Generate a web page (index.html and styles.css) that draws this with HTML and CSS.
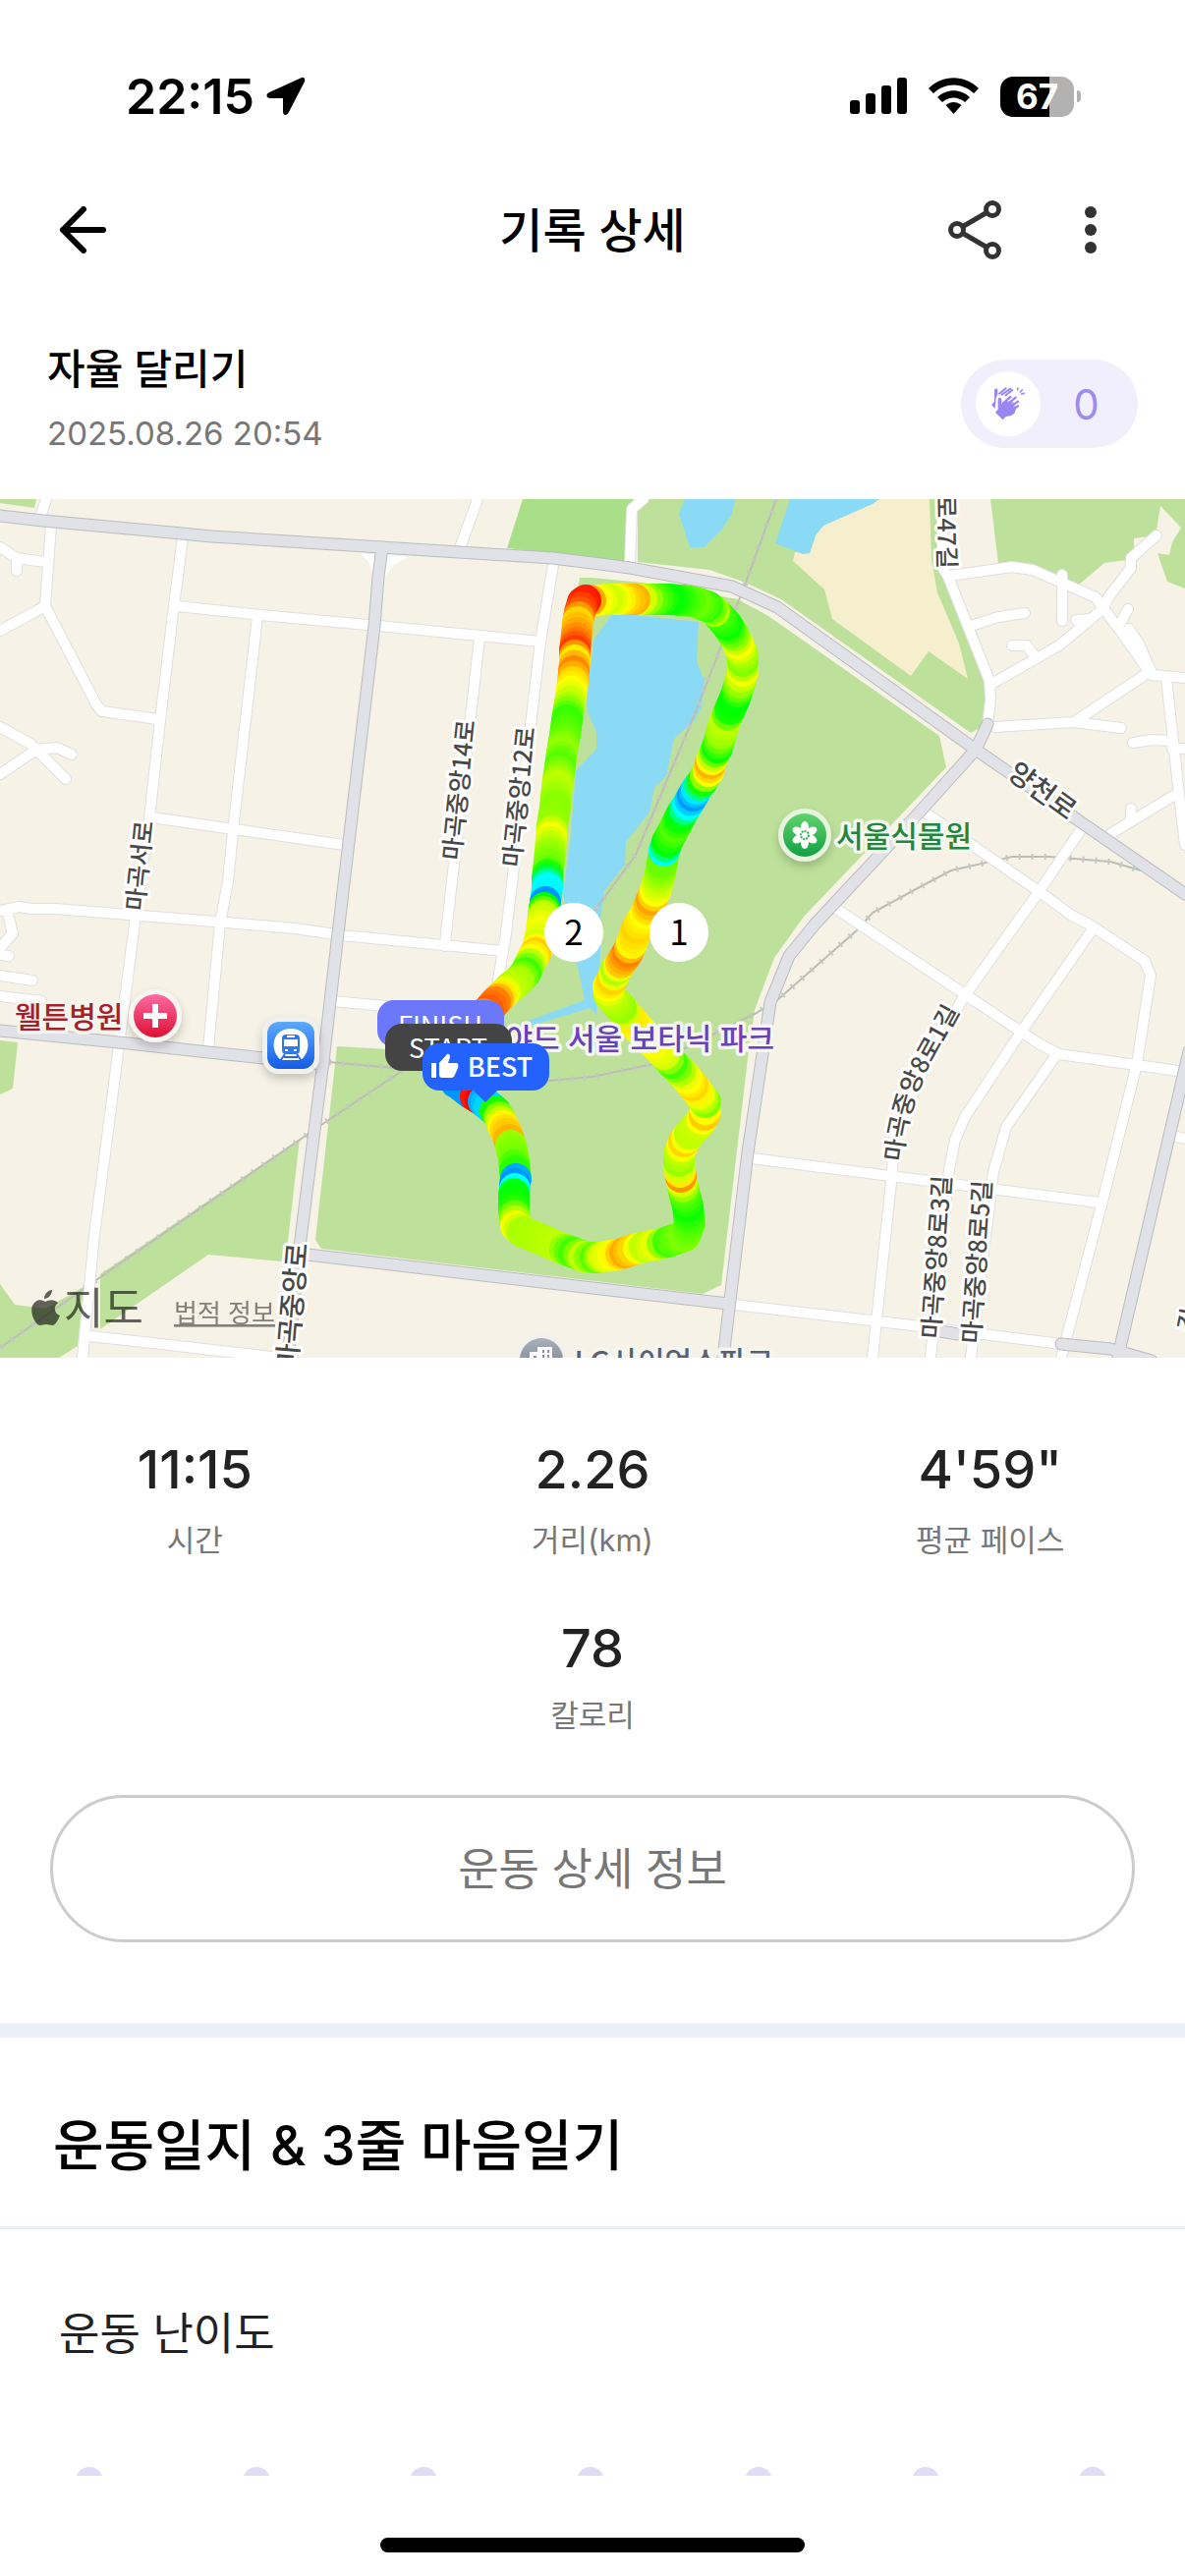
FILE: index.html
```
<!DOCTYPE html>
<html lang="ko">
<head>
  <meta charset="UTF-8" />
  <meta name="viewport" content="width=device-width, initial-scale=1.0"/>
  <title>기록 상세</title>
  <link rel="stylesheet" href="styles.css">
</head>
<body>
  <div class="status-bar">
    <div class="status-left">
      <span class="clock">22:15</span>
      <svg width="40" height="40" viewBox="0 0 40 40"><path d="M36 1 3 16c-4 2-3 6 1 6h13v13c0 5 4 5 6 1L39 5c1-3-1-5-3-4z"/></svg>
    </div>
    <div class="status-right">
      <svg width="58" height="38" viewBox="0 0 58 38">
        <rect x="0" y="23" width="10" height="14" rx="3"/>
        <rect x="16" y="16" width="10" height="21" rx="3"/>
        <rect x="32" y="8" width="10" height="29" rx="3"/>
        <rect x="48" y="0" width="10" height="37" rx="3"/>
      </svg>
      <svg width="51" height="38" viewBox="0 0 51 38">
        <path d="M0 11C14-3.500 37-3.500 51 11l-5 5C34 4.500 17 4.500 5 16z"/>
        <path d="M9 20c9-9 24-9 33 0l-5 5c-7-6-16-6-23 0z"/>
        <path d="M17.500 28c5-4 11-4 16 0l-8 9z"/>
      </svg>
      <div class="battery"><span>67</span></div>
    </div>
  </div>

  <header class="app-bar">
    <button class="icon-btn" aria-label="뒤로">
      <svg width="48" height="48" viewBox="0 0 48 48"><path d="M25 3 4 24l21 21M4 24h41" fill="none" stroke="#000" stroke-width="6" stroke-linecap="round" stroke-linejoin="round"/></svg>
    </button>
    <h1>기록 상세</h1>
    <div class="actions">
      <button class="icon-btn" aria-label="공유">
        <svg width="54" height="60" viewBox="0 0 54 60" fill="none" stroke="#333" stroke-width="5">
          <path d="M9 30 45 9M9 30l36 21"/>
          <g fill="#fff"><circle cx="9" cy="30" r="6.500"/><circle cx="45" cy="9" r="6.500"/><circle cx="45" cy="51" r="6.500"/></g>
        </svg>
      </button>
      <button class="icon-btn" aria-label="더보기">
        <svg width="12" height="48" viewBox="0 0 12 48" fill="#333"><circle cx="6" cy="6" r="6"/><circle cx="6" cy="24" r="6"/><circle cx="6" cy="42" r="6"/></svg>
      </button>
    </div>
  </header>

  <main>
    <section class="summary">
      <div class="summary-text">
        <h2>자율 달리기</h2>
        <time>2025.08.26 20:54</time>
      </div>
      <button class="clap" aria-label="박수">
        <span class="clap-icon">
          <svg width="34" height="34" viewBox="0 0 102 102" fill="#9a86f0" stroke="#9a86f0" stroke-linecap="round">
            <path d="M9 10v34L0 54l11 12 3-32 5-12V9c-1-6-9-6-10 1z" stroke="none"/>
            <path d="M24 20 44 4M32 23 58 5M44 25 64 9" stroke-width="6"/>
            <path d="M20 36c1-6 10-5 11 1v15l14-9 22 2 8 22-4 12c-10 12-22 9-28 12l-8 9-23-23 8-9z" stroke="none"/>
            <path d="M36 49 58 30M46 54 74 32M56 62 81 44M62 70l19-12" stroke-width="7"/>
            <path d="M52 42l11-8M62 50l14-11M68 60l10-7" stroke="#fff" stroke-width="2"/>
            <path d="M80 3v5M94 9l-6 6M92 21l7-2" stroke-width="5"/>
          </svg>
        </span>
        <span class="clap-count">0</span>
      </button>
    </section>

    <!-- map -->
    <svg class="map" viewBox="0 508 1206 874" role="img" aria-label="달리기 경로 지도">
      <defs>
        <linearGradient id="pinGreen" x2="0" y2="1"><stop stop-color="#5fd36b"/><stop offset="1" stop-color="#12a043"/></linearGradient>
        <linearGradient id="pinRed" x2="0" y2="1"><stop stop-color="#ff6ba6"/><stop offset="1" stop-color="#dc0f31"/></linearGradient>
        <linearGradient id="pinBlue" x2="0" y2="1"><stop stop-color="#5babff"/><stop offset="1" stop-color="#165ae4"/></linearGradient>
        <linearGradient id="pinGray" x2="0" y2="1"><stop stop-color="#a9afbb"/><stop offset="1" stop-color="#6f7683"/></linearGradient>
        <filter id="shadow" x="-30%" y="-30%" width="160%" height="180%"><feDropShadow dx="0" dy="5" stdDeviation="5" flood-color="#000" flood-opacity=".2"/></filter>
        <path id="lane1" d="M918 1183C924 1130 935 1105 946 1085L982 1020"/>
      </defs>

      <rect class="land" y="508" width="1206" height="874"/>

      <g class="park">
        <path d="M0 508h37l-2 9-35-5z"/>
        <path class="park-deep" d="M532 508h112l-4 66-37-7-87-9z"/>
        <path d="M649 508h310l-1 66 8 20 41 100 2 40-21 12-193-136-36-17-37-13-73-8z"/>
        <path d="M1008 508l8 65 15-2 18 6 49 18 26-22 30-4v-21l22-3 5-30 21 22-9 15-3 13-12-2 10 29 18 7v-91z"/>
        <path d="M590 588h13l50 5 98 17 31 17 174 122 7 32-145 152-30 42-20 53-7 49-27 231-19 9-388-46-6-9 22-197 137 8 25-33 43-110 18-200z"/>
        <path d="M0 1059l18 2-5 47-13 6z"/>
        <path d="M305 1159 102 1297v56l110-76 75 7 6-21z"/>
        <path d="M0 1307l15 21 31 4 39-22-6 60-19 12H0z"/>
      </g>
      <path class="sand" d="M895 508l-59 27-6 10-6 18-15-1-2 9 32 29 8 30 80 58 18-25 40 28-9-36-22-52-6-33-2-62z"/>
      <g class="water">
        <path d="M697 508l-6 15 11 34h14l18-17 11-17 3-15z"/>
        <path d="M804 508l-15 45 28 11 7-1 6-18 8-10 50-22 7-5z"/>
        <path d="M624 624l87 9-2 40 8 20-3 27-7 13-21 19-8 38-12 12-5 25-24 30-1 23-21 27-4 30v36l-4 60-6-7-65 19-1-5 60-22-22-108 8-60 5-65 21-23v-17l-8-18-2-10 2-24 6-43z"/>
      </g>

      <g class="rail">
        <path d="M790 508 759 593 707 727 647 870 603 930 406 1092 327 1145 102 1300 0 1372"/>
        <path d="M335 1081l65 6 160 13 43-4 62-13 103-51 23-14 81-71 16-18 46-25 34-18 62-14h38l62 5 31 9"/>
      </g>
      <g class="rail-ticks">
        <path d="M790 508 759 593 707 727 647 870 603 930 406 1092 327 1145 102 1300 0 1372"/>
        <path d="M335 1081l65 6 160 13 43-4 62-13 103-51 23-14 81-71 16-18 46-25 34-18 62-14h38l62 5 31 9"/>
      </g>

      <g id="streets">
        <path d="M47 508l-7 22"/>
        <path d="M52 535l-6 82-46 25M46 617l52 100 6 7 56 8"/>
        <path d="M0 557l17 11 29 4M17 568v13"/>
        <path d="M186 546l-11 87-12 100-11 100-15 107-27 210-14 107-12 125"/>
        <path d="M181 617l84 9 120 11 165 16"/>
        <path d="M262 628l-24 209-6 60-8 43-12 127"/>
        <path d="M154 832l84 12 112 16"/>
        <path d="M563 575l-13 78-35 297-11 65"/>
        <path d="M488 650l-34 300-1 13"/>
        <path d="M0 740l31 17 36 36M0 788l37-25 21-2 15 7"/>
        <path d="M0 927l19-4 14 2h23l175 14 69 6 48 7 164 16"/>
        <path d="M8 930l5 20-13 15M0 972l9 1M0 993l33 5M0 1014l42 5"/>
        <path d="M338 1019l65 6M92 1360l89 10 104 12"/>
        <path d="M486 508l-18 50M655 508l-12 10-2 55"/>
        <path d="M959 508v69l6 10 42 106 1 20-3 24"/>
        <path d="M966 586l64-9 21 3 64 28 7 10 19 25 31 44 34 3"/>
        <path d="M1177 545l-26 23v10l-23 30-6 12-44 37-67 38"/>
        <path d="M1081 585v47M988 637l28-9 27-4M1030 657h15l8 11M1095 631l14-1M1148 620l-7 13M1149 640l10 15 13 30"/>
        <path d="M1165 687l-72 48-80 5M1093 735l48 6"/>
        <path d="M1187 690l12 110 7 60M1153 756l19-3 20 1M1193 762h13M1199 807l-69 42M1151 823v10"/>
        <path d="M940 826l117 81 34 25 16 8 58 38 6 15-14 90-35 140-42 159"/>
        <path d="M1101 843l-44 65-75 105-35 60-36 80-4 50-19 179"/>
        <path d="M1111 947l-73 105-56 85-10 23-6 30-19 192"/>
        <path d="M1074 1075l-50 72-13 46-23 189"/>
        <path d="M851 925l131 87 75 50 21 11 121 17"/>
        <path d="M765 1179l353 45M747 1328l148 17 185 23M1197 1157l9 2"/>
      </g>
      <path class="street-corner" d="M367 563l48 4-14 8-10 12-11-1-4-13z"/>

      <g id="avenues">
        <path d="M0 525l44 5 141 13 30 3 173 11 174 11 41 5 38 5 104 19 46 21 202 145 213 147"/>
        <path d="M389 557l-4 30-4 50-37 313-15 130-25 197-11 105"/>
        <path d="M0 1049l131 13 81 9 57 6 60 6M313 1277l290 34 138 16"/>
        <path d="M1005 737l-12 26-63 70-100 107-27 33-19 47-23 153-25 209"/>
        <path d="M1210 1070l-72 310M1080 1368l50 5 42 12M957 1355l18 3"/>
      </g>

      <g class="street-names">
        <text transform="translate(151 882) rotate(-84)">마곡서로</text>
        <text transform="translate(476 805) rotate(-84)">마곡중앙14로</text>
        <text transform="translate(537 812) rotate(-84)">마곡중앙12로</text>
        <text transform="translate(962 1280) rotate(-86)">마곡중앙8로3길</text>
        <text transform="translate(1003 1285) rotate(-86)">마곡중앙8로5길</text>
        <text class="at-start"><textPath href="#lane1">마곡중앙8로1길</textPath></text>
        <text class="at-end" transform="translate(955 579) rotate(89)">로47길</text>
        <text class="major" transform="translate(1055 813) rotate(36)">양천로</text>
        <text class="major at-end" transform="translate(313 1266) rotate(-85)">마곡중앙로</text>
        <text transform="translate(1219 1345) rotate(-78)">길</text>
      </g>

      <g class="place place-green">
        <circle cx="819" cy="850" r="27" fill="#e7f3df" filter="url(#shadow)"/>
        <circle cx="819" cy="850" r="22" fill="url(#pinGreen)"/>
        <g fill="#fff">
          <ellipse cx="819" cy="842" rx="4" ry="6"/><ellipse cx="819" cy="842" rx="4" ry="6" transform="rotate(60 819 850)"/>
          <ellipse cx="819" cy="842" rx="4" ry="6" transform="rotate(120 819 850)"/><ellipse cx="819" cy="842" rx="4" ry="6" transform="rotate(180 819 850)"/>
          <ellipse cx="819" cy="842" rx="4" ry="6" transform="rotate(240 819 850)"/><ellipse cx="819" cy="842" rx="4" ry="6" transform="rotate(300 819 850)"/>
        </g>
        <circle cx="819" cy="850" r="4" fill="#fff" stroke="#33b457" stroke-width="2" stroke-dasharray="2 1"/>
        <text x="851" y="862">서울식물원</text>
      </g>
      <g class="place place-red">
        <circle cx="158" cy="1034" r="27" fill="#f7f5f0" filter="url(#shadow)"/>
        <circle cx="158" cy="1034" r="22" fill="url(#pinRed)"/>
        <path d="M158 1022v24M146 1034h24" stroke="#fff" stroke-width="6"/>
        <text x="15" y="1046">웰튼병원</text>
      </g>
      <g>
        <rect x="267" y="1035" width="58" height="58" rx="17" fill="#f1f0ec" filter="url(#shadow)"/>
        <rect x="272" y="1040" width="48" height="48" rx="12" fill="url(#pinBlue)"/>
        <path d="M286 1079c-12-9-10-32 10-32s22 23 10 32z" fill="#fff"/>
        <rect x="287" y="1053" width="18" height="20" rx="4" fill="#2f78ef"/>
        <path d="M289 1058h14v7h-14zM292 1054h8v2h-8zM290 1068h3v2h-3zM299 1068h3v2h-3z" fill="#fff"/>
        <path d="M290 1073l-5 7M302 1073l5 7M289 1076h14" stroke="#2467e8" stroke-width="2"/>
      </g>
      <g class="place place-gray">
        <circle cx="551" cy="1384" r="27" fill="#f2f1ed"/>
        <circle cx="551" cy="1384" r="22" fill="url(#pinGray)"/>
        <path d="M539 1376h8v-5h15v20h-23z" fill="#fff"/>
        <path d="M552 1374h2v3h-2zM557 1374h2v3h-2zM552 1379h2v3h-2zM557 1379h2v3h-2zM543 1380h3v3h-3z" fill="#8b919d"/>
        <text class="at-end" x="787" y="1397">LG사이언스파크</text>
      </g>

      <g id="route"></g>

      <g class="place place-purple">
        <text class="at-end" x="788" y="1068">야드 서울 보타닉 파크</text>
      </g>

      <g class="lap">
        <circle cx="691" cy="949" r="30"/><text x="691" y="962">1</text>
        <circle cx="584" cy="949" r="30"/><text x="584" y="962">2</text>
      </g>
      <g class="badge">
        <rect x="384" y="1018" width="129" height="48" rx="17" fill="#6b78fb"/><text x="448" y="1054">FINISH</text>
        <rect x="392" y="1042" width="129" height="48" rx="17" fill="#444"/><text x="456" y="1077">START</text>
        <path d="M481 1109h26l-13 13z" fill="#2462ff"/>
        <rect x="430" y="1062" width="129" height="48" rx="17" fill="#2462ff"/>
        <path d="M439 1082h5v15h-5zM447 1082l8-9c2-1 3 1 3 3l-2 6h8c2 0 3 2 2 5l-4 9-2 1h-10c-2 0-3-1-3-3z" fill="#fff"/>
        <text class="best" x="509" y="1096">BEST</text>
      </g>

      <g class="attribution">
        <path d="M53 1313c0 5-4 9-8 9 0-5 4-9 8-9zM59 1326c-5 4-4 11 2 13-2 5-5 10-8 10-2 0-3-1-6-1s-4 1-6 1c-5 0-11-13-8-20 3-6 8-7 13-4 4-2 9-3 13 1z"/>
        <text class="brand" x="65" y="1348">지도</text>
        <a href="#legal"><text class="legal" x="177" y="1346">법적 정보</text></a>
      </g>
    </svg>

    <section class="record">
      <dl class="stats">
        <div class="stat"><dt>시간</dt><dd>11:15</dd></div>
        <div class="stat"><dt>거리(km)</dt><dd>2.26</dd></div>
        <div class="stat"><dt>평균 페이스</dt><dd>4'59"</dd></div>
        <div class="stat wide"><dt>칼로리</dt><dd>78</dd></div>
      </dl>
      <button class="detail-btn">운동 상세 정보</button>
    </section>

    <section class="journal">
      <h2>운동일지 &amp; 3줄 마음일기</h2>
      <fieldset class="level">
        <legend>운동 난이도</legend>
        <div class="level-options">
          <input type="radio" name="level" value="1" aria-label="1">
          <input type="radio" name="level" value="2" aria-label="2">
          <input type="radio" name="level" value="3" aria-label="3">
          <input type="radio" name="level" value="4" aria-label="4">
          <input type="radio" name="level" value="5" aria-label="5">
          <input type="radio" name="level" value="6" aria-label="6">
          <input type="radio" name="level" value="7" aria-label="7">
        </div>
      </fieldset>
    </section>
  </main>

  <footer class="home-area"><div class="home-indicator"></div></footer>

  <script>
    const svgNS = "http://www.w3.org/2000/svg";

    // every road is drawn twice: outline first, then the fill on top
    ["streets", "avenues"].forEach((id) => {
      const fill = document.getElementById(id);
      const casing = fill.cloneNode(true);
      casing.removeAttribute("id");
      casing.setAttribute("class", id + "-casing");
      fill.setAttribute("class", id + "-fill");
      fill.parentNode.insertBefore(casing, fill);
    });

    // x, y, hue (0 = fast, 205 = slow)
    const points = [
      [460, 1098, 55], [464, 1102, 205], [470, 1106, 205], [479, 1113, 205], [484, 1116, 5], [489, 1119, 0], [492, 1121, 200], [498, 1126, 190],
      [504, 1131, 115], [508, 1137, 90], [512, 1146, 58], [516, 1154, 48], [518, 1160, 42], [520, 1166, 85], [523, 1180, 92], [524, 1192, 110],
      [525, 1200, 200], [524, 1205, 205], [524, 1210, 180], [523, 1215, 125], [523, 1232, 112], [525, 1248, 62],
      [532, 1254, 80], [552, 1262, 78], [570, 1270, 75], [584, 1275, 105], [594, 1279, 75], [606, 1280, 100], [614, 1279, 70],
      [628, 1277, 58], [636, 1275, 40], [644, 1272, 50], [656, 1269, 75], [668, 1267, 65], [680, 1264, 105], [697, 1258, 90],
      [702, 1245, 100], [700, 1228, 118], [696, 1213, 100], [694, 1203, 70], [693, 1198, 35], [692, 1193, 55], [691, 1182, 85],
      [692, 1172, 75], [696, 1162, 50], [702, 1154, 75], [712, 1143, 72], [717, 1135, 48], [718, 1129, 60], [718, 1122, 90],
      [712, 1114, 65], [705, 1105, 50], [696, 1094, 65], [684, 1082, 105], [676, 1073, 70], [665, 1062, 62], [650, 1047, 60],
      [640, 1035, 55], [632, 1026, 85], [620, 1013, 75], [619, 1004, 60], [623, 997, 50], [627, 987, 80], [632, 980, 48],
      [639, 969, 30], [643, 960, 58], [648, 945, 50], [657, 930, 60], [663, 916, 38], [667, 907, 60], [671, 893, 78],
      [674, 878, 95], [676, 866, 178], [679, 857, 120], [687, 842, 100], [694, 828, 125], [700, 819, 178], [705, 810, 205],
      [709, 803, 185], [715, 795, 115], [721, 785, 60], [723, 777, 42], [726, 769, 75], [730, 761, 118], [734, 747, 85],
      [738, 733, 75], [743, 722, 115], [749, 708, 122], [753, 695, 85], [756, 683, 62], [756, 673, 90], [755, 664, 80],
      [751, 655, 60], [747, 647, 85], [740, 636, 118], [731, 626, 105], [727, 622, 80], [720, 617, 108], [708, 613, 95],
      [696, 611, 105], [680, 610, 122], [665, 610, 100], [653, 610, 70], [646, 610, 42], [636, 610, 50], [627, 610, 62],
      [618, 610, 72], [608, 611, 60], [601, 611, 40], [596, 611, 5], [593, 613, 8], [590, 623, 20], [588, 633, 50], [587, 644, 40],
      [586, 654, 28], [585, 662, 14], [585, 672, 55], [584, 683, 32], [583, 694, 50], [581, 708, 65], [579, 720, 80],
      [577, 733, 108], [575, 748, 100], [572, 765, 85], [570, 780, 100], [567, 800, 75], [565, 822, 88], [562, 840, 85],
      [561, 852, 62], [560, 866, 80], [558, 885, 95], [557, 895, 130], [557, 904, 180], [556, 912, 182], [555, 918, 205],
      [554, 924, 120], [553, 932, 75], [551, 948, 62], [548, 962, 70], [545, 970, 48], [541, 977, 62], [535, 990, 105],
      [528, 998, 82], [518, 1006, 75], [510, 1014, 55], [504, 1020, 30], [497, 1028, 22], [488, 1036, 42]
    ];

    const route = document.getElementById("route");
    const step = 5;

    for (let i = 0; i < points.length - 1; i++) {
      const [x1, y1, h1] = points[i];
      const [x2, y2, h2] = points[i + 1];
      const count = Math.max(1, Math.round(Math.hypot(x2 - x1, y2 - y1) / step));
      // big pace changes switch colour at once
      const jump = Math.abs(h2 - h1) > 70;

      for (let n = 0; n < count; n++) {
        const t = n / count;
        const dot = document.createElementNS(svgNS, "circle");
        dot.setAttribute("cx", x1 + (x2 - x1) * t);
        dot.setAttribute("cy", y1 + (y2 - y1) * t);
        dot.setAttribute("r", 16);
        dot.setAttribute("fill", `hsl(${jump ? h1 : h1 + (h2 - h1) * t}, 100%, 50%)`);
        route.appendChild(dot);
      }
    }
  </script>
</body>
</html>
```
FILE: styles.css
```
* {
  box-sizing: border-box;
}

body {
  margin: 0;
  height: 100vh;
  display: flex;
  flex-direction: column;
  background: #fff;
  color: #000;
  font-family: Inter, "Noto Sans CJK KR", sans-serif;
}

h1, h2, dl, dd {
  margin: 0;
}

h1, h2, dd {
  font-weight: 500;
}

button {
  border: none;
  background: none;
  padding: 0;
  font-family: inherit;
  cursor: pointer;
}

svg {
  display: block;
}

/* status bar */
.status-bar {
  display: flex;
  justify-content: space-between;
  align-items: center;
  height: 132px;
  padding: 64px 106px 0 128px;
}

.status-left {
  display: flex;
  align-items: center;
  gap: 12px;
}

.clock {
  font-size: 50px;
  font-weight: 600;
}

.status-right {
  display: flex;
  align-items: center;
  gap: 22px;
}

.battery {
  position: relative;
  width: 75px;
  height: 41px;
  margin-right: 7px;
  border-radius: 13px;
  background: linear-gradient(to right, #000 67%, #b2b2b2 67%);
  color: #fff;
  font-size: 35px;
  font-weight: 700;
  line-height: 41px;
  text-align: center;
}

.battery::after {
  content: "";
  position: absolute;
  right: -7px;
  top: 14px;
  width: 4px;
  height: 12px;
  border-radius: 0 4px 4px 0;
  background: #b2b2b2;
}

/* app bar */
.app-bar {
  display: grid;
  grid-template-columns: 1fr auto 1fr;
  align-items: center;
  height: 204px;
  padding: 0 90px 0 60px;
}

.app-bar h1 {
  font-size: 48px;
  padding: 0 0 6px 30px;
}

.icon-btn {
  justify-self: start;
}

.actions {
  display: flex;
  align-items: center;
  justify-content: flex-end;
  gap: 85px;
}

main {
  flex: 1;
  min-height: 0;
  overflow: hidden;
}

/* summary */
.summary {
  display: flex;
  justify-content: space-between;
  align-items: flex-end;
  padding: 16px 48px 52px;
}

.summary-text {
  display: flex;
  flex-direction: column;
  gap: 26px;
}

.summary h2 {
  font-size: 42px;
  line-height: 48px;
}

.summary time {
  font-size: 33px;
  line-height: 30px;
  color: #777;
}

.clap {
  display: flex;
  align-items: center;
  width: 180px;
  height: 90px;
  padding: 0 6px 0 15px;
  border-radius: 45px;
  background: #f2effd;
}

.clap-icon {
  display: flex;
  align-items: center;
  justify-content: center;
  width: 66px;
  height: 66px;
  border-radius: 50%;
  background: #fff;
}

.clap-count {
  flex: 1;
  color: #9c8cef;
  font-size: 42px;
}

/* map */
.map {
  width: 100%;
  height: auto;
  font-family: "Noto Sans CJK KR", sans-serif;
}

.land { fill: #f6f2e6; }
.park { fill: #bde19a; }
.park-deep { fill: #a9df88; }
.sand { fill: #f6efcd; }
.water { fill: #8adaf5; }

.rail path {
  fill: none;
  stroke: #bcbeb6;
  stroke-width: 2;
}

.rail-ticks path {
  fill: none;
  stroke: #c6c8c1;
  stroke-width: 6;
  stroke-dasharray: 2 11;
}

.streets-casing, .streets-fill, .avenues-casing, .avenues-fill {
  fill: none;
  stroke-linejoin: round;
  stroke-linecap: round;
}

.streets-casing { stroke: #dfdfe0; stroke-width: 12; }
.streets-fill { stroke: #fff; stroke-width: 10; }
.avenues-casing { stroke: #babbbf; stroke-width: 13; }
.avenues-fill { stroke: #e1e2e7; stroke-width: 11; }
.street-corner { fill: #fff; }

.street-names text {
  fill: #484848;
  stroke: #fff;
  stroke-width: 6;
  stroke-linejoin: round;
  paint-order: stroke;
  font-size: 25px;
  font-weight: 500;
  text-anchor: middle;
}

.street-names .major {
  font-size: 28px;
}

.street-names .at-start {
  text-anchor: start;
}

.street-names .at-end, .place .at-end {
  text-anchor: end;
}

.place text {
  stroke: #f4f6ef;
  stroke-width: 7;
  stroke-linejoin: round;
  paint-order: stroke;
  font-size: 30px;
  font-weight: 500;
}

.place-green text { fill: #23863f; }
.place-red text { fill: #a81e2c; }
.place-gray text { fill: #5b5f72; }
.place-purple text { fill: #6742b8; }

.lap circle {
  fill: #fff;
}

.lap text {
  font-size: 35px;
  text-anchor: middle;
}

.badge text {
  fill: #fff;
  font-size: 27px;
  text-anchor: middle;
}

.badge .best {
  font-weight: 500;
}

.attribution {
  opacity: 0.6;
}

.brand {
  font-size: 44px;
}

.legal {
  fill: #333;
  font-size: 26px;
  text-decoration: underline;
}

/* record */
.record {
  padding: 82px 51px;
}

.stats {
  display: grid;
  grid-template-columns: repeat(3, 1fr);
  gap: 58px 8px;
  margin: 0 -51px 61px;
}

.stat {
  display: flex;
  flex-direction: column-reverse;
  gap: 20px;
  text-align: center;
}

.stat.wide {
  grid-column: 1 / -1;
  gap: 16px;
}

.stat dt {
  color: #777;
  font-size: 31px;
  line-height: 40px;
}

.stat dd {
  color: #222;
  font-size: 54px;
  line-height: 64px;
}

.detail-btn {
  display: block;
  width: 100%;
  height: 150px;
  padding-bottom: 6px;
  border: 3px solid #ccc;
  border-radius: 75px;
  color: #777;
  font-size: 45px;
}

/* journal */
.journal {
  border-top: 15px solid #ebeff8;
}

.journal h2 {
  padding: 78px 54px 50px;
  border-bottom: 3px solid #ebeff8;
  font-size: 56px;
  line-height: 64px;
}

.level {
  margin: 0;
  padding: 83px 0 0;
  border: none;
}

.level legend {
  float: left;
  width: 100%;
  padding: 0 60px;
  color: #222;
  font-size: 45px;
  line-height: 48px;
}

.level-options {
  clear: both;
  display: flex;
  justify-content: space-between;
  padding: 111px 80px 0 77px;
}

.level-options input {
  appearance: none;
  width: 28px;
  height: 28px;
  margin: 0;
  border-radius: 50%;
  background: #e1dcf5;
}

/* home indicator */
.home-area {
  display: flex;
  justify-content: center;
  height: 102px;
  padding-top: 63px;
}

.home-indicator {
  width: 432px;
  height: 15px;
  border-radius: 8px;
  background: #000;
}
```
